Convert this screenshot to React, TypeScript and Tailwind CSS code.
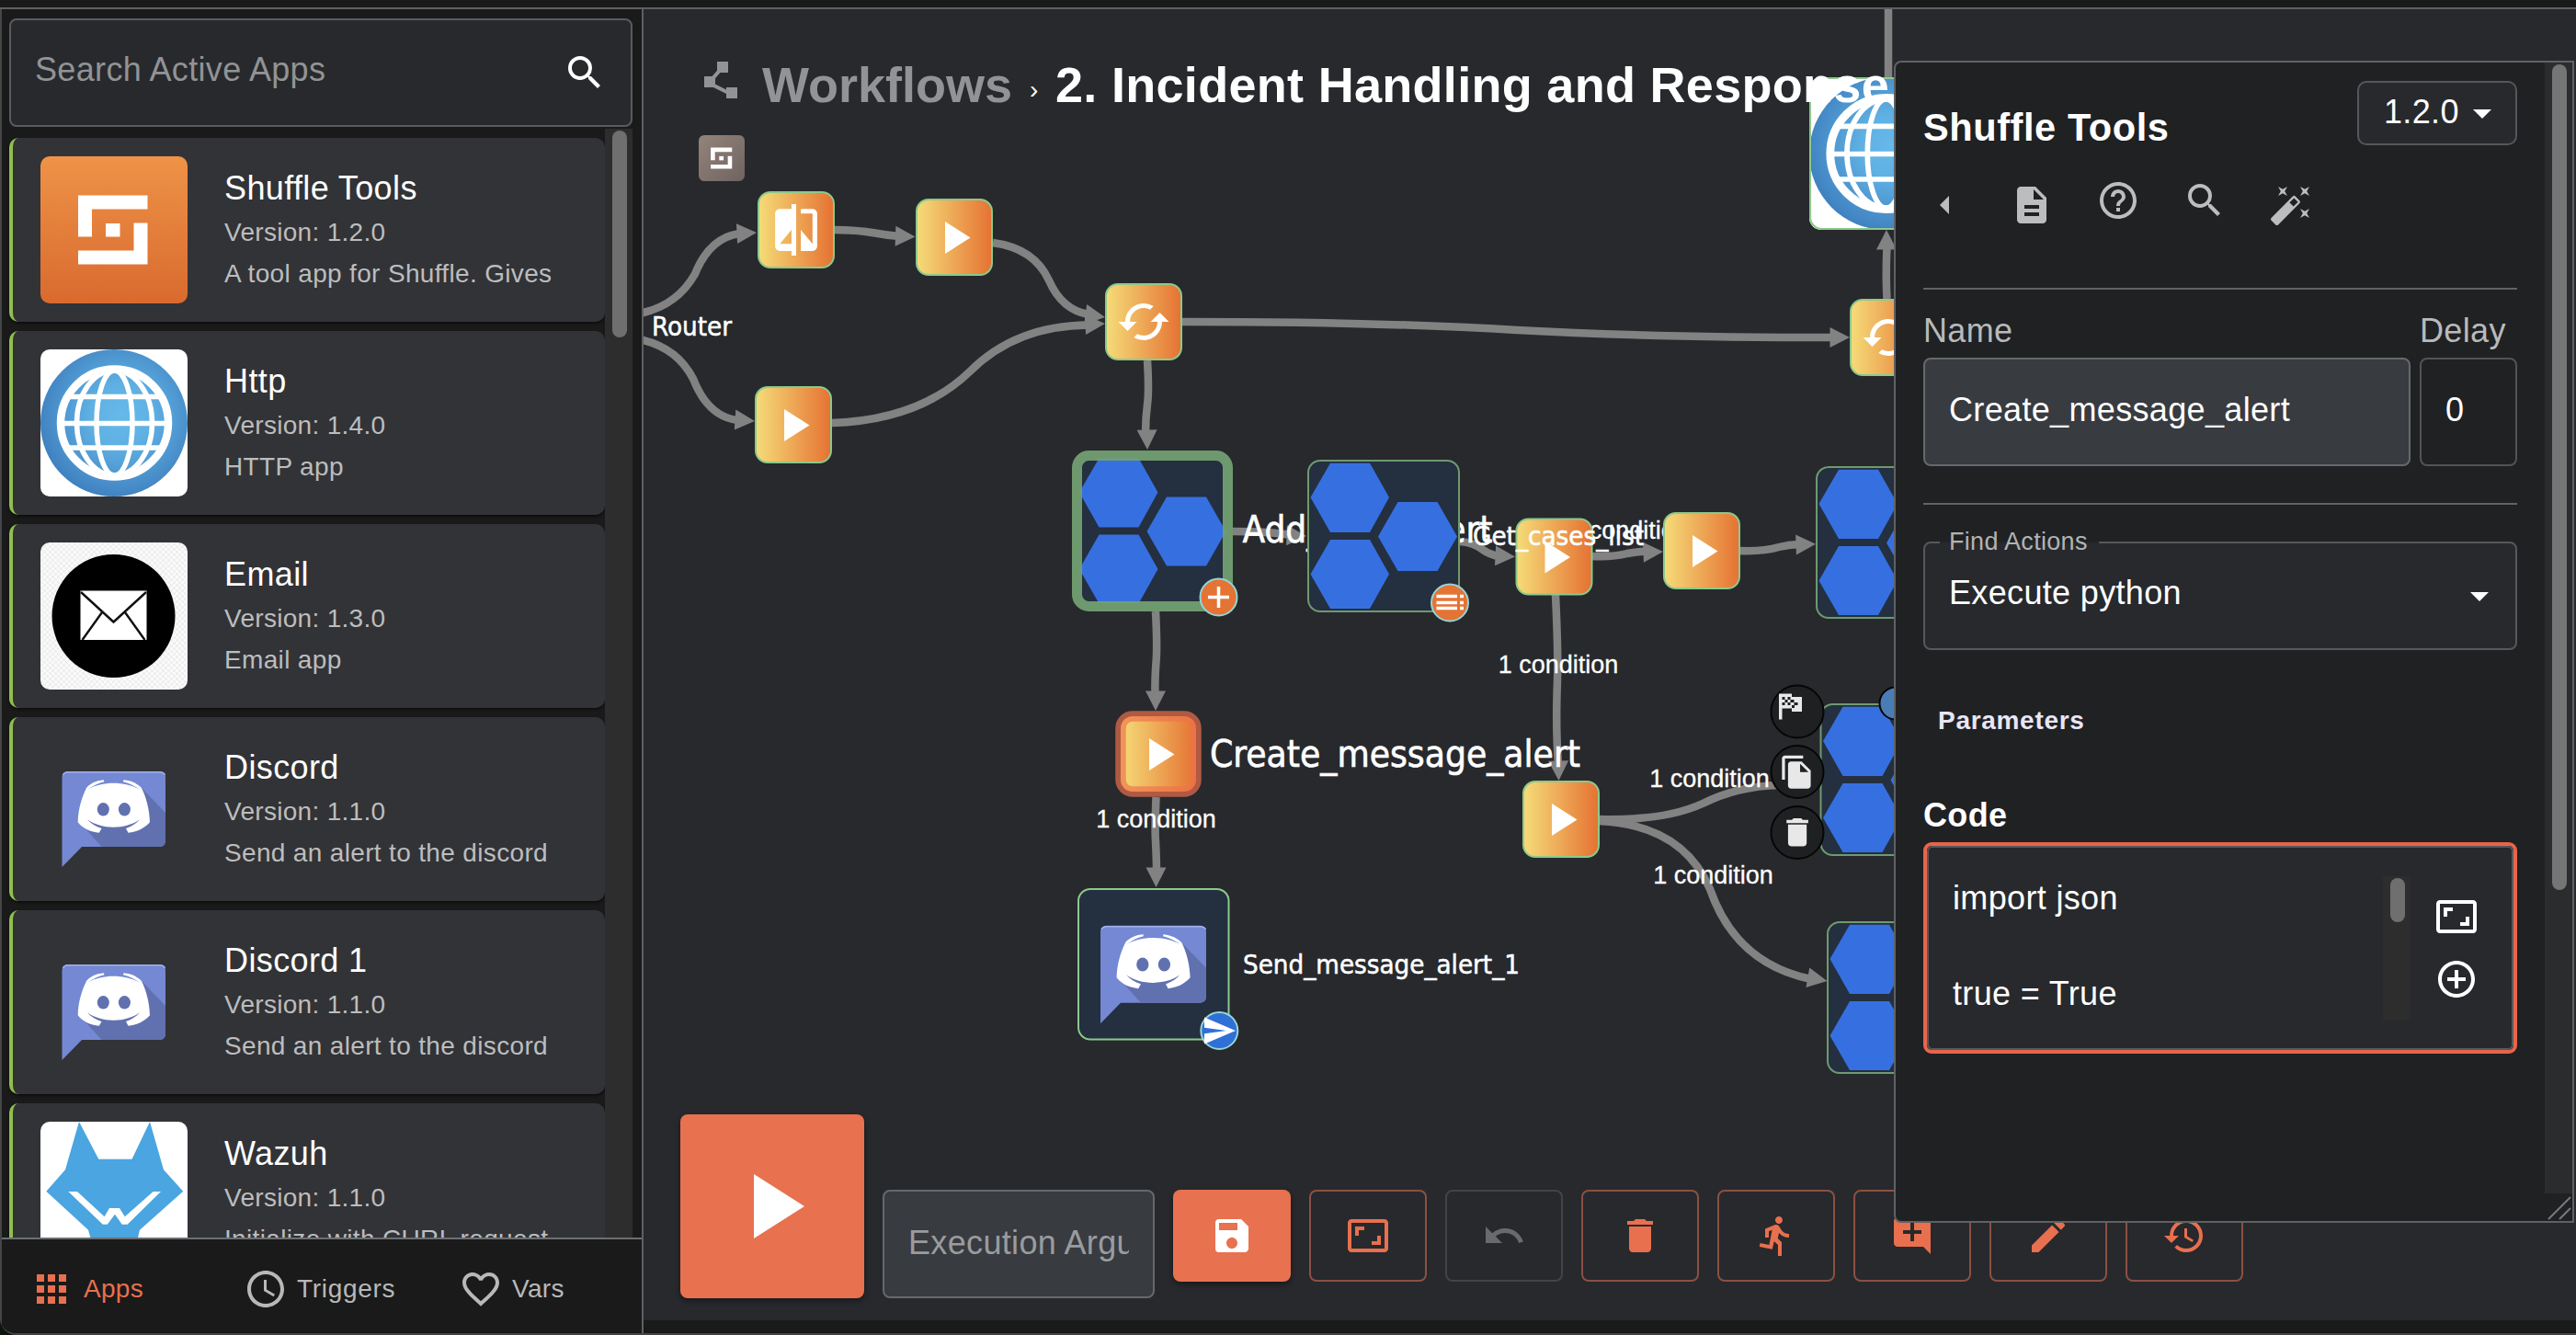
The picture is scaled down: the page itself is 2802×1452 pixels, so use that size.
import React from "react";
import {
  MdAccessTime,
  MdAddCircleOutline,
  MdAddComment,
  MdApps,
  MdArrowDropDown,
  MdArrowLeft,
  MdAspectRatio,
  MdAutoFixHigh,
  MdCached,
  MdCompare,
  MdDelete,
  MdDescription,
  MdDirectionsRun,
  MdEdit,
  MdFavoriteBorder,
  MdFileCopy,
  MdHelpOutline,
  MdPolyline,
  MdRestore,
  MdSave,
  MdSearch,
  MdUndo,
} from "react-icons/md";

/* ---------- app artwork, all drawn on a 160 x 160 field ---------- */

function ShuffleMark({ fill = "#fff" }: { fill?: string }) {
  return (
    <g fill={fill}>
      <path d="M41 42.5H116.5V57.5H56V87.5H41Z" />
      <path d="M101.500 72.500H116.500V117.500H41V102.500H101.500Z" />
      <rect x="71" y="73" width="15.500" height="14.500" />
    </g>
  );
}

function ShuffleArt() {
  return (
    <>
      <defs>
        <linearGradient id="shuffleBg" x1="0" y1="0" x2="0" y2="1">
          <stop offset="0" stopColor="#ee9347" />
          <stop offset="1" stopColor="#d96a2f" />
        </linearGradient>
      </defs>
      <rect width="160" height="160" fill="url(#shuffleBg)" />
      <ShuffleMark />
    </>
  );
}

function GlobeArt() {
  return (
    <>
      <defs>
        <radialGradient id="globeBg" cx="0.55" cy="0.45" r="0.6">
          <stop offset="0" stopColor="#67b9ea" />
          <stop offset="0.35" stopColor="#5fb0e3" />
          <stop offset="1" stopColor="#3d7dbd" />
        </radialGradient>
      </defs>
      <rect width="160" height="160" fill="#fff" />
      <circle cx="80" cy="80" r="80" fill="url(#globeBg)" />
      <g fill="none" stroke="#fff" strokeWidth="5.500">
        <circle cx="80.500" cy="80" r="58.500" strokeWidth="8.500" />
        <ellipse cx="80.500" cy="80" rx="19.500" ry="57" />
        <ellipse cx="80.500" cy="80" rx="41" ry="57" />
        <path d="M29 51.500H132M22 80.500H139M29 107H132" />
      </g>
    </>
  );
}

function EmailArt() {
  return (
    <>
      <defs>
        <pattern id="checks" width="6" height="6" patternUnits="userSpaceOnUse">
          <rect width="6" height="6" fill="#fafafa" />
          <rect width="3" height="3" fill="#efefef" />
          <rect x="3" y="3" width="3" height="3" fill="#efefef" />
        </pattern>
      </defs>
      <rect width="160" height="160" fill="url(#checks)" />
      <circle cx="79.500" cy="80" r="67" fill="#000" />
      <rect x="43.500" y="52.500" width="72" height="53.500" fill="#fff" />
      <path d="M44 54L79.500 86.500L115 54M45.500 106L67 76M113.500 106L92 76" fill="none" stroke="#111" strokeWidth="2.400" />
    </>
  );
}

function DiscordArt() {
  return (
    <>
      <path d="M29.500 39H130A6 6 0 0 1 136 45V115A6 6 0 0 1 130 121H45L23.500 143V45A6 6 0 0 1 29.500 39Z" fill="#7588d3" />
      <path d="M110 57L136 84V115A6 6 0 0 1 130 121H66.500L45 97L80 60Z" fill="#6171b0" />
      <path d="M24.500 43Q26 39.800 30 39.800H130Q134 39.800 135.500 43" fill="none" stroke="#a3b2ec" strokeWidth="1.500" />
      <path
        fill="#fff"
        d="M69 48.300C60 49 53 53 50 57C45 67 41 80 40.700 94.300C46 101 54 105 63.800 105.800L66.500 101C60 99 55 96 51 91.300C66 102.500 93 102.500 108 91.300C104 96 99 99 93 101L95.500 105.800C105 105 113 101 119 94.300C118.500 80 115 67 110 57C106 53 100 49 90.500 48.300L90 50.200C97 52 103 55 107.700 58.500C92 49.500 67 49.500 51.500 58.500C57 55 62 52 69.300 50.200Z"
      />
      <ellipse cx="68.300" cy="80.300" rx="6.500" ry="7.300" fill="#6171b0" />
      <ellipse cx="91.400" cy="80.300" rx="6.500" ry="7.300" fill="#6171b0" />
    </>
  );
}

function WazuhArt() {
  return (
    <>
      <rect width="160" height="160" fill="#fff" />
      <path
        d="M42 0L63.300 40.700H99.500L119 0L134 52.300L155.200 75.700L108 117.700L98 160H64L52 117.700L6.300 75.700L27 52.300Z"
        fill="#4aa5e0"
      />
      <path
        d="M30.300 76H40L69.600 103.300L75 94H86L91.800 103.300L122.600 76H131L94.600 111.700H88.700L81 100.700L72.800 111.700H67.800Z"
        fill="#fff"
      />
    </>
  );
}

/* ---------- sidebar ---------- */

const apps: { name: string; version: string; text: string; art: React.ReactNode }[] = [
  { name: "Shuffle Tools", version: "1.2.0", text: "A tool app for Shuffle. Gives", art: <ShuffleArt /> },
  { name: "Http", version: "1.4.0", text: "HTTP app", art: <GlobeArt /> },
  { name: "Email", version: "1.3.0", text: "Email app", art: <EmailArt /> },
  { name: "Discord", version: "1.1.0", text: "Send an alert to the discord", art: <DiscordArt /> },
  { name: "Discord 1", version: "1.1.0", text: "Send an alert to the discord", art: <DiscordArt /> },
  { name: "Wazuh", version: "1.1.0", text: "Initialize with CURL request", art: <WazuhArt /> },
];

function Sidebar() {
  return (
    <aside className="flex h-full w-[700px] shrink-0 flex-col border-x-2 border-l-[#454647] border-r-[#5d6062] bg-[#1a1a1a]">
      <div className="mt-[10px] mr-[10px] ml-2 flex h-[118px] shrink-0 items-center justify-between rounded-lg border-2 border-[#595b5f] bg-[#27292d] pr-[26px] pl-[26px]">
        <span className="pb-[6px] text-[36px] leading-[46px] tracking-[0.34px] text-[#929395]">Search Active Apps</span>
        <MdSearch className="size-12 text-white" />
      </div>
      <div className="mt-[2px] flex h-[1206px] shrink-0 overflow-hidden pr-[10px] pl-2">
        <div className="flex w-[648px] flex-col gap-[10px] pt-[10px]">
          {apps.map((app) => (
            <div
              key={app.name}
              className="flex h-[200px] shrink-0 rounded-[10px] border-l-4 border-[#8fbf4d] bg-[#323337] pl-[30px] shadow-[0_2px_3px_rgba(0,0,0,0.5)]"
            >
              <svg viewBox="0 0 160 160" className="mt-5 size-40 rounded-[10px]">
                {app.art}
              </svg>
              <div className="ml-10 flex flex-col pt-[31px] whitespace-nowrap">
                <span className="text-[36px] leading-[48px] tracking-[0.38px] text-white">{app.name}</span>
                <span className="text-[28px] leading-[48px] tracking-[0.3px] text-[#bcbdbe]">Version: {app.version}</span>
                <span className="text-[28px] leading-[42px] tracking-[0.34px] text-[#bcbdbe]">{app.text}</span>
              </div>
            </div>
          ))}
        </div>
        <div className="w-[30px] bg-[#2d2d2d] px-2 pt-[2px]">
          <div className="h-[225px] w-4 rounded-full bg-[#6f6f6f]" />
        </div>
      </div>
      <nav className="flex flex-1 border-t-2 border-[#6b6f71] pt-[30px] pl-[30px] text-[28px] leading-[48px] tracking-[0.3px] text-[#b8b8b9]">
        <div className="flex w-[233px] gap-[11px] text-[#e8704e]">
          <MdApps className="size-12" />
          <span>Apps</span>
        </div>
        <div className="flex w-[234px] gap-[10px]">
          <MdAccessTime className="size-12" />
          <span className="tracking-[0.7px]">Triggers</span>
        </div>
        <div className="flex gap-[10px]">
          <MdFavoriteBorder className="size-12" />
          <span>Vars</span>
        </div>
      </nav>
    </aside>
  );
}

/* ---------- workflow graph; page coordinates ---------- */

function Edge({ d, tip, angle }: { d: string; tip?: [number, number]; angle?: number }) {
  return (
    <g>
      <path d={d} fill="none" stroke="#828282" strokeWidth="8.500" />
      {tip && <path d="M0 0L-21.500 -11V11Z" fill="#828282" transform={`translate(${tip[0]} ${tip[1]}) rotate(${angle ?? 0})`} />}
    </g>
  );
}

function ToolNode({ x, y, icon = "play", selected = false }: { x: number; y: number; icon?: "play" | "loop" | "compare"; selected?: boolean }) {
  return (
    <g transform={`translate(${x} ${y})`}>
      <rect x="1" y="1" width="82" height="82" rx="13" fill="url(#nodeBg)" stroke={selected ? "none" : "#8cc98b"} strokeWidth="2" />
      {selected && <rect x="1" y="1" width="82" height="82" rx="13" fill="none" stroke="#f0724d" strokeOpacity="0.68" strokeWidth="11.500" />}
      {icon === "play" && <path d="M32 25L59.500 42.500L32 60Z" fill="#fff" />}
      {icon === "loop" && <MdCached x="12" y="12" size={60} color="#fff" />}
      {icon === "compare" && <MdCompare x="11.500" y="11.500" size={61} color="#fff" />}
    </g>
  );
}

function HiveNode({ x, y, thick = false }: { x: number; y: number; thick?: boolean }) {
  return (
    <g transform={`translate(${x} ${y})`}>
      <rect x="1" y="1" width="164" height="164" rx="13" fill="#242f3f" />
      <g fill="#3670e0">
        <path d="M3.500 41L25 3.700H68L89 41L68 79H25Z" />
        <path d="M3.500 124.500L25 87H68L89 124.500L68 162H25Z" />
        <path d="M77 83.500L98.500 46H141.500L163 83.500L141.500 121H98.500Z" />
      </g>
      <rect
        x="1"
        y="1"
        width="164"
        height="164"
        rx="13"
        fill="none"
        stroke={thick ? "#73a073" : "#6f9a70"}
        strokeOpacity={thick ? 0.94 : 1}
        strokeWidth={thick ? 11 : 2}
      />
    </g>
  );
}

function NodeLabel({ x, y, size, width, children }: { x: number; y: number; size: number; width: number; children: string }) {
  return (
    <text
      x={x}
      y={y}
      fontSize={size}
      textLength={width}
      lengthAdjust="spacingAndGlyphs"
      fill="#fff"
      stroke="#fff"
      strokeWidth={size > 30 ? 0.6 : 0.5}
      className="font-['DejaVu_Sans_Condensed','DejaVu_Sans',sans-serif]"
    >
      {children}
    </text>
  );
}

function Condition({ x, y }: { x: number; y: number }) {
  return (
    <text x={x} y={y} fontSize="27" textAnchor="middle" fill="#fff" stroke="#fff" strokeWidth="0.300">
      1 condition
    </text>
  );
}

function Graph() {
  return (
    <svg viewBox="700 10 2102 1426" className="absolute inset-0 h-[1426px] w-[2102px]">
      <defs>
        <linearGradient id="nodeBg" x1="0" y1="0" x2="1" y2="0">
          <stop offset="0" stopColor="#f5dc78" />
          <stop offset="1" stopColor="#e57233" />
        </linearGradient>
        <linearGradient id="ghostBg" x1="0" y1="0" x2="1" y2="1">
          <stop offset="0" stopColor="#93857a" />
          <stop offset="1" stopColor="#706261" />
        </linearGradient>
      </defs>

      <Edge d="M690 342Q735 335 756 298Q772 258 805 254" tip={[823, 253]} angle={-3} />
      <Edge d="M690 368Q735 375 754 412Q770 453 802 457" tip={[821, 458]} angle={4} />
      <Edge d="M908 250Q932 250 952 253.500Q965 256 978 257" tip={[995.5, 257.5]} angle={2} />
      <Edge d="M1080 264Q1125 270 1141 305Q1155 337 1184 342" tip={[1202, 345]} angle={8} />
      <Edge d="M905 460Q1000 457 1055 404Q1105 354 1184 353.500" tip={[1202, 352]} angle={-3} />
      <Edge d="M1286 350Q1500 350 1650 359Q1800 367 1994 367" tip={[2012, 367]} />
      <Edge d="M1248 392Q1250 425 1248 440Q1246 455 1246 472" tip={[1248, 489]} angle={89} />
      <Edge d="M2054 10V84" />
      <Edge d="M2052.500 325Q2051 300 2052.500 268" tip={[2052, 250]} angle={-90} />
      <Edge d="M1341 578Q1380 578 1404 582" tip={[1421, 583]} angle={2} />
      <Edge d="M1588 589Q1603 590 1613 598Q1620 603 1630 605" tip={[1648, 605.5]} angle={3} />
      <Edge d="M1257 665Q1259 705 1257.500 720Q1256 740 1256.500 756" tip={[1257, 773]} angle={90} />
      <Edge d="M1257.500 867Q1256 905 1257 915Q1258 935 1258 948" tip={[1257.5, 965]} angle={90} />
      <Edge d="M1732 605Q1755 606 1770 602Q1780 600 1792 599.500" tip={[1809, 600]} angle={-2} />
      <Edge d="M1892 599Q1918 600 1935 595Q1945 592.500 1957 592" tip={[1975, 591.7]} angle={-2} />
      <Edge d="M1692 647Q1695 710 1694 740Q1692 790 1695 832" tip={[1695.5, 849]} angle={89} />
      <Edge d="M1739 891Q1810 893 1852 874Q1890 855 1935 854" />
      <Edge d="M1739 893Q1830 897 1860 967Q1888 1048 1970 1065" tip={[1987.5, 1067]} angle={10} />
      <Condition x={1771.5} y={586} />
      <Condition x={1695} y={732} />
      <Condition x={1859.5} y={856} />
      <Condition x={1863.5} y={961} />
      <Condition x={1257.5} y={900} />

      <NodeLabel x={709} y={364.5} size={29} width={87}>Router</NodeLabel>
      <g transform="translate(760 147)">
        <rect width="50" height="50" rx="6" fill="url(#ghostBg)" />
        <g transform="translate(0.500 0.500) scale(0.307)">
          <ShuffleMark />
        </g>
      </g>

      <ToolNode x={824} y={208} icon="compare" />
      <ToolNode x={996} y={216} />
      <ToolNode x={1202} y={308} icon="loop" />
      <ToolNode x={821} y={420} />
      <ToolNode x={2012} y={325} icon="loop" />
      <g transform="translate(1968 84)">
        <clipPath id="httpClip">
          <rect width="166" height="166" rx="13" />
        </clipPath>
        <g clipPath="url(#httpClip)">
          <g transform="scale(1.0375)">
            <GlobeArt />
          </g>
        </g>
        <rect x="1" y="1" width="164" height="164" rx="13" fill="none" stroke="#8cc98b" strokeWidth="2" />
      </g>

      <HiveNode x={1170.5} y={494.5} thick />
      <NodeLabel x={1351.5} y={590} size={40} width={272}>Add_case_alert</NodeLabel>
      <g>
        <circle cx="1325.500" cy="649.500" r="20" fill="#e57334" stroke="#93d5d8" strokeWidth="2" />
        <path d="M1314 649.500H1337M1325.500 638V661" stroke="#fff" strokeWidth="3.500" />
      </g>
      <HiveNode x={1422} y={500} />
      <g>
        <circle cx="1577" cy="655.500" r="20" fill="#e57334" stroke="#93d5d8" strokeWidth="2" />
        <path d="M1562.500 648.500H1585M1588 648.500H1592M1562.500 655.500H1585M1588 655.500H1592M1562.500 661.500H1585M1588 661.500H1592" stroke="#fff" strokeWidth="3.300" />
      </g>
      <ToolNode x={1648.5} y={563.5} />
      <ToolNode x={1809} y={557} />
      <NodeLabel x={1602} y={593} size={28} width={186}>Get_cases_list</NodeLabel>
      <HiveNode x={1975} y={507} />
      <ToolNode x={1656} y={849} />
      <ToolNode x={1218} y={778} selected />
      <NodeLabel x={1316} y={833.5} size={40} width={403}>Create_message_alert</NodeLabel>

      <g transform="translate(1172 966)">
        <rect x="1" y="1" width="163.500" height="163.500" rx="13" fill="#242f3f" stroke="#8cc98b" strokeWidth="2" />
        <g transform="translate(1 1) scale(1.022)">
          <DiscordArt />
        </g>
      </g>
      <circle cx="1326.300" cy="1121" r="20" fill="#2f70d6" stroke="#93d5d8" strokeWidth="2" />
      <path d="M1310 1106.500L1344 1121L1310 1135.500V1124.300L1334 1121L1310 1117.700Z" fill="#fff" />
      <NodeLabel x={1352} y={1058.5} size={29} width={301}>Send_message_alert_1</NodeLabel>

      <HiveNode x={1979.5} y={765} />
      <HiveNode x={1987} y={1002} />
      <circle cx="2062" cy="765" r="17.500" fill="#4a7db5" stroke="#050505" strokeWidth="2" />

      <g fill="#1e2022" stroke="#060606" strokeWidth="2">
        <circle cx="1955" cy="774" r="28.500" />
        <circle cx="1955" cy="839.500" r="28.500" />
        <circle cx="1955" cy="905.500" r="28.500" />
      </g>
      <g fill="#e8e8e8">
        <path d="M1935 754.500H1949V758H1960V774H1949V770.500H1938.500V782.500H1935Z" />
        <path
          fill="#1e2022"
          d="M1938.500 758h3v3h-3zM1944.500 758h3v3h-3zM1941.500 761h3v3h-3zM1947.500 761h4v3h-4zM1938.500 764h3v3h-3zM1944.500 764h3v3h-3zM1951.500 764h4v3h-4zM1949 767h3v3h-3z"
        />
      </g>
      <MdFileCopy x="1935" y="820" size={39.5} color="#e8e8e8" />
      <MdDelete x="1934.800" y="885" size={40.5} color="#e8e8e8" />
    </svg>
  );
}

/* ---------- bottom toolbar ---------- */

const outlined = "flex h-[100px] w-32 items-center justify-center rounded-lg border-2";

function Toolbar() {
  return (
    <div className="absolute bottom-6 left-10 flex h-[200px] gap-5">
      <button className="flex size-[200px] items-center justify-center rounded-lg bg-[#e8714f] shadow-[0_3px_6px_rgba(0,0,0,0.4)]">
        <svg viewBox="0 0 55 70" className="ml-[14px] h-[70px] w-[55px]">
          <path d="M0 0L55 35L0 70Z" fill="#fff" />
        </svg>
      </button>
      <div className="mt-[82px] flex h-[118px] w-[296px] items-center rounded-lg border-2 border-[#66686c] bg-[#383b40] px-[26px] pb-[3px]">
        <span className="w-[240px] overflow-hidden text-[36px] leading-[46px] tracking-[0.34px] whitespace-nowrap text-[#9a9b9e]">
          Execution Argument
        </span>
      </div>
      <div className="mt-[82px] flex gap-5 text-[#e8704e]">
        <button className="flex h-[100px] w-32 items-center justify-center rounded-lg bg-[#e8714f] shadow-[0_3px_6px_rgba(0,0,0,0.4)]">
          <MdSave className="size-12 text-white" />
        </button>
        <button className={`${outlined} border-[#8c5041]`}>
          <MdAspectRatio className="size-12" />
        </button>
        <button className={`${outlined} border-[#424448]`}>
          <MdUndo className="size-12 text-[#686a6c]" />
        </button>
        <button className={`${outlined} border-[#8c5041]`}>
          <MdDelete className="size-12" />
        </button>
        <button className={`${outlined} border-[#8c5041]`}>
          <MdDirectionsRun className="size-12" />
        </button>
        <button className={`${outlined} border-[#8c5041]`}>
          <MdAddComment className="size-12" />
        </button>
        <button className={`${outlined} border-[#8c5041]`}>
          <MdEdit className="size-12" />
        </button>
        <button className={`${outlined} border-[#8c5041]`}>
          <MdRestore className="size-12" />
        </button>
      </div>
    </div>
  );
}

/* ---------- action details ---------- */

function DetailsPanel() {
  return (
    <section className="absolute top-14 left-[1360px] flex h-[1264px] w-[740px] rounded-l-lg border-2 border-[#5f6164] bg-[#1f2123] tracking-[0.34px]">
      <div className="flex w-[706px] shrink-0 flex-col pr-[30px] pl-[30px]">
        <div className="mt-5 flex h-[106px] justify-between">
          <h2 className="mt-[26px] text-[41.6px] leading-[50px] font-bold tracking-[0.55px] text-white">Shuffle Tools</h2>
          <div className="flex h-[70px] w-[174px] items-center rounded-[10px] border-2 border-[#55575a] bg-[#27292d] pl-[27px] text-[36px] leading-[46px] text-white">
            <span className="pb-[3px]">1.2.0</span>
            <MdArrowDropDown className="ml-[1px] size-12" />
          </div>
        </div>
        <div className="flex h-[53px] gap-[46px] text-[#bcbdbe]">
          <MdArrowLeft className="mt-[5px] size-12" />
          <MdDescription className="mt-[5px] size-12" />
          <MdHelpOutline className="size-12" />
          <MdSearch className="size-12" />
          <MdAutoFixHigh className="mt-[5px] size-12" />
        </div>
        <hr className="mt-[66px] border-t-2 border-[#606264]" />
        <div className="mt-[22px] flex gap-[10px] text-[36px] leading-[46px]">
          <label className="w-[530px] text-[#b9babb]">Name</label>
          <label className="text-[#b9babb]">Delay</label>
        </div>
        <div className="mt-[6px] flex gap-[10px] text-[36px] text-white">
          <div className="flex h-[118px] w-[530px] items-center rounded-lg border-2 border-[#66686c] bg-[#383b40] pb-[4px] pl-[26px]">
            Create_message_alert
          </div>
          <div className="flex h-[118px] w-[106px] items-center rounded-lg border-2 border-[#515356] pb-[4px] pl-[26px]">0</div>
        </div>
        <hr className="mt-10 border-t-2 border-[#606264]" />
        <div className="relative mt-10 flex h-[118px] items-center justify-between rounded-lg border-2 border-[#56585b] bg-[#27292d] pr-[15px] pl-[26px] text-[36px] text-white">
          <span className="pb-[6px]">Execute python</span>
          <MdArrowDropDown className="size-12" />
          <div className="absolute -top-[2px] left-4 h-[2px] w-[173px] bg-[#232528]" />
          <span className="absolute -top-[20px] left-[26px] text-[27px] leading-[36px] tracking-[0.3px] text-[#b2b3b4]">Find Actions</span>
        </div>
        <h3 className="mt-[57px] ml-4 text-[28px] leading-10 font-bold tracking-[0.7px] text-[#e8e6f5]">Parameters</h3>
        <h3 className="mt-[60px] text-[36px] leading-[46px] font-bold text-white">Code</h3>
        <div className="mt-[6px] h-[230px] rounded-[9px] border-4 border-[#e8644a]">
          <div className="flex h-full rounded-md border-2 border-[#57595c] bg-[#27292d] pl-[26px]">
            <pre className="mt-[29px] w-[468px] font-['Liberation_Sans',Arial,sans-serif] text-[36px] leading-[51.75px] text-white">
              {"import json\n\ntrue = True"}
            </pre>
            <div className="mt-[31px] h-[157px] w-[30px] bg-[#2d2d2d] px-2 pt-[2px]">
              <div className="h-12 w-4 rounded-full bg-[#6f6f6f]" />
            </div>
            <div className="mt-[51px] ml-[26px] flex flex-col gap-5 text-white">
              <MdAspectRatio className="size-12" />
              <MdAddCircleOutline className="size-12" />
            </div>
          </div>
        </div>
      </div>
      <div className="relative flex w-[30px] flex-col bg-[#2b2c2d] px-2 pt-[2px]">
        <div className="h-[898px] w-4 rounded-full bg-[#757575]" />
        <svg viewBox="0 0 30 30" className="absolute right-0 bottom-0 size-[30px] bg-[#1f2123]">
          <path d="M4 28L28 4M16 28L28 16" stroke="#77797b" strokeWidth="2" />
        </svg>
      </div>
    </section>
  );
}

export default function App() {
  return (
    <div className="flex h-[1452px] w-[2802px] flex-col overflow-hidden bg-[#0d150d] font-['Liberation_Sans',Arial,sans-serif]">
      <div className="flex h-full flex-col overflow-hidden rounded-bl-[18px] border-b-2 border-[#434445] bg-[#1a1a1a]">
        <div className="h-[10px] shrink-0 border-b-2 border-[#5d6062]" />
        <div className="flex min-h-0 flex-1">
          <Sidebar />
          <main className="relative h-[1426px] flex-1 overflow-hidden bg-[#27292d]">
            <Graph />
            <header className="absolute top-[53px] left-[60px] flex whitespace-nowrap">
              <MdPolyline className="size-12 text-[#929396]" />
              <span className="-mt-[1px] ml-[21px] w-[273px] text-[54px] leading-[60px] font-bold text-[#929396]">Workflows</span>
              <span className="mt-[12px] ml-[18px] w-[12px] text-[28px] leading-[46px] text-white">›</span>
              <span className="-mt-[1px] ml-[16px] text-[54px] leading-[60px] font-bold tracking-[0.3px] text-white">
                2. Incident Handling and Response
              </span>
            </header>
            <Toolbar />
            <DetailsPanel />
          </main>
        </div>
      </div>
    </div>
  );
}
